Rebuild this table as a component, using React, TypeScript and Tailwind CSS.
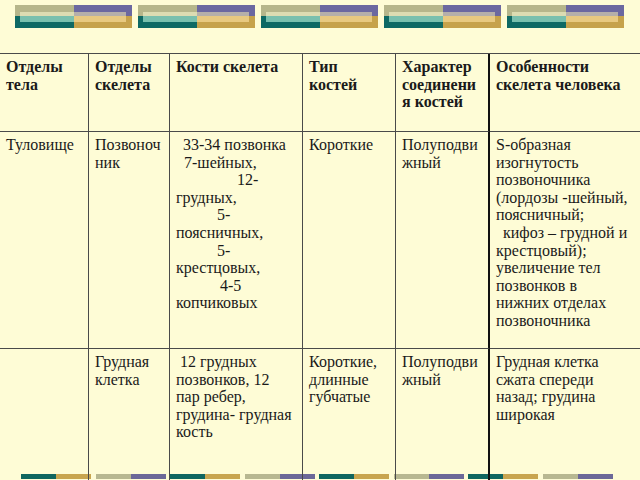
const Block = () => (
  <div className="flex w-[117px] h-[23px]">
    <div className="flex flex-col w-1/2">
      <div className="h-[11px] bg-[#b6b68b] pt-[7px] pl-[5px]">
        <div className="h-full bg-[#dcdcb2]" />
      </div>
      <div className="h-[12px] bg-[#0e6964] pb-[6px] pl-[5px]">
        <div className="h-full bg-[#79c0ae]" />
      </div>
    </div>
    <div className="flex flex-col w-1/2">
      <div className="h-[11px] bg-[#6b68a0] pt-[7px] pr-[6px]">
        <div className="h-full bg-[#b5afaa]" />
      </div>
      <div className="h-[12px] bg-[#c6a24b] pb-[6px] pr-[6px]">
        <div className="h-full bg-[#e8c980]" />
      </div>
    </div>
  </div>
);

type Line = { t: string; i?: string };

const Cell = ({
  lines,
  bold,
  className = "",
}: {
  lines: Line[];
  bold?: boolean;
  className?: string;
}) => (
  <div className={`pt-[4px] pl-[6px] border-[#4a4a4a] ${bold ? "font-bold" : ""} ${className}`}>
    {lines.map((l, k) => (
      <div key={k} className={`whitespace-nowrap ${l.i ?? ""}`}>
        {l.t}
      </div>
    ))}
  </div>
);

const L = (...s: string[]): Line[] => s.map((t) => ({ t }));

export default function App() {
  const pairs = [0, 1, 2, 3, 4, 5, 6, 7];
  return (
    <div className="relative w-[640px] h-[480px] overflow-hidden bg-[#fefcd6] text-[#1a1a1a] [font-family:Liberation_Serif,serif] text-[16px] leading-[17.6px]">
      <div className="flex gap-[6px] pt-[5px] pl-[15px]">
        <Block />
        <Block />
        <Block />
        <Block />
        <Block />
      </div>

      {/* bottom strip, sits under the table lines */}
      <div className="absolute left-[21px] top-[474px] flex gap-[4.5px]">
        {pairs.map((p) => (
          <div key={p} className="flex w-[70px] h-[5px]">
            <div className={`w-1/2 ${p % 2 === 0 ? "bg-[#10665f]" : "bg-[#b8b891]"}`} />
            <div className={`w-1/2 ${p % 2 === 0 ? "bg-[#c8a54f]" : "bg-[#6c6898]"}`} />
          </div>
        ))}
      </div>

      <div className="relative mt-[25px] h-[427px] border-t border-[#4a4a4a] grid grid-cols-[89px_81px_133px_93px_94px_1fr] grid-rows-[78px_217px_1fr]">
        <Cell bold className="border-r border-b" lines={L("Отделы", "тела")} />
        <Cell bold className="border-r border-b" lines={L("Отделы", "скелета")} />
        <Cell bold className="border-r border-b" lines={L("Кости скелета")} />
        <Cell bold className="border-r border-b" lines={L("Тип", "костей")} />
        <Cell
          bold
          className="border-b border-r-2 !border-r-[#111]"
          lines={L("Характер", "соединени", "я костей")}
        />
        <Cell bold className="border-b" lines={L("Особенности", "скелета человека")} />

        <Cell className="border-r border-b" lines={L("Туловище")} />
        <Cell className="border-r border-b" lines={L("Позвоноч", "ник")} />
        <Cell
          className="border-r border-b"
          lines={[
            { t: "33-34 позвонка", i: "pl-[7px]" },
            { t: "7-шейных,", i: "pl-[8px]" },
            { t: "12-", i: "pl-[61px]" },
            { t: "грудных," },
            { t: "5-", i: "pl-[41px]" },
            { t: "поясничных," },
            { t: "5-", i: "pl-[41px]" },
            { t: "крестцовых," },
            { t: "4-5", i: "pl-[44px]" },
            { t: "копчиковых" },
          ]}
        />
        <Cell className="border-r border-b" lines={L("Короткие")} />
        <Cell className="border-b border-r-2 !border-r-[#111]" lines={L("Полуподви", "жный")} />
        <Cell
          className="border-b"
          lines={[
            { t: "S-образная" },
            { t: "изогнутость" },
            { t: "позвоночника" },
            { t: "(лордозы -шейный," },
            { t: "поясничный;" },
            { t: "кифоз – грудной и", i: "pl-[7px]" },
            { t: "крестцовый);" },
            { t: "увеличение тел" },
            { t: "позвонков в" },
            { t: "нижних отделах" },
            { t: "позвоночника" },
          ]}
        />

        <Cell className="border-r" lines={[]} />
        <Cell className="border-r" lines={L("Грудная", "клетка")} />
        <Cell
          className="border-r"
          lines={[
            { t: "12 грудных", i: "pl-[4px]" },
            { t: "позвонков, 12" },
            { t: "пар ребер," },
            { t: "грудина- грудная" },
            { t: "кость" },
          ]}
        />
        <Cell className="border-r" lines={L("Короткие,", "длинные", "губчатые")} />
        <Cell className="border-r-2 !border-r-[#111]" lines={L("Полуподви", "жный")} />
        <Cell lines={L("Грудная клетка", "сжата спереди", "назад; грудина", "широкая")} />
      </div>
    </div>
  );
}
